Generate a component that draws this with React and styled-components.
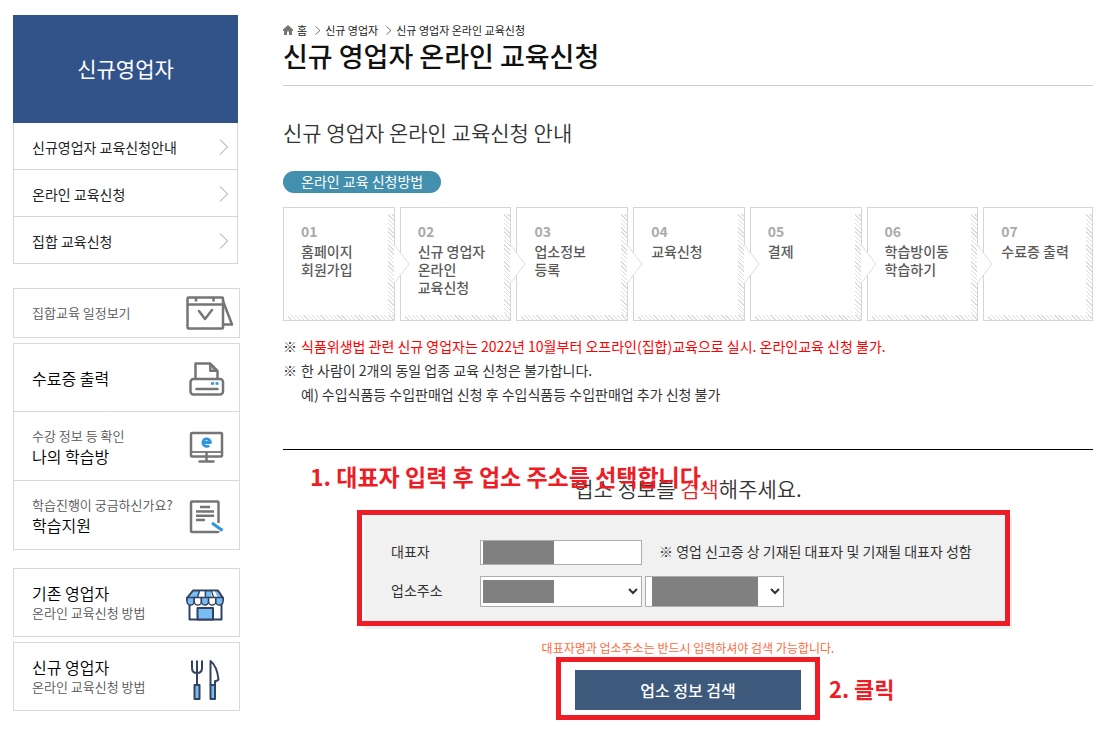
import React from "react";
import styled, { createGlobalStyle } from "styled-components";

const GlobalStyle = createGlobalStyle`
  *, *::before, *::after { box-sizing: border-box; }
  body {
    margin: 0;
    background: #fff;
    color: #333;
    font-family: "Noto Sans CJK KR", "Noto Sans", sans-serif;
    font-size: 14px;
    font-weight: 400;
    line-height: 20px;
  }
  h1, h2, h3, p, ul, ol { margin: 0; padding: 0; font-weight: inherit; }
  ul, ol { list-style: none; }
  a { color: inherit; text-decoration: none; }
`;

const Page = styled.div`
  display: flex;
  align-items: flex-start;
  gap: 43px;
  padding: 15px 20px 11px 13px;
`;

const Sidebar = styled.aside`
  flex: none;
  width: 227px;
`;

const MenuBox = styled.nav`
  width: 225px;
  margin-bottom: 24px;
`;

const MenuTitle = styled.h2`
  display: flex;
  align-items: center;
  justify-content: center;
  height: 108px;
  padding-bottom: 2px;
  background: #32528a;
  color: #fff;
  font-size: 21px;
`;

const MenuList = styled.ul`
  border: solid #d6d6d6;
  border-width: 0 1px;
`;

const MenuLink = styled.a`
  display: flex;
  align-items: center;
  justify-content: space-between;
  height: 47px;
  padding: 1px 8px 0 18px;
  border-bottom: 1px solid #d6d6d6;
  color: #222;
`;

const LinkBox = styled.ul`
  margin-bottom: ${(p) => (p.$last ? 18 : 5)}px;
  border: 1px solid #d9d9d9;
`;

const LinkRow = styled.a`
  display: flex;
  align-items: center;
  justify-content: space-between;
  height: ${(p) => (p.$short ? 48 : 67)}px;
  padding: 0 ${(p) => (p.$short ? 5 : 14)}px 0 18px;

  li + li > & {
    height: 69px;
    border-top: 1px solid #d9d9d9;
  }
`;

const LinkText = styled.span`
  display: flex;
  flex-direction: column;
`;

const Small = styled.span`
  color: #555;
  font-size: 13px;
  font-weight: 350;
`;

const Strong = styled.span`
  color: #000;
  font-size: 16px;
  font-weight: 350;
`;

const Main = styled.main`
  flex: 1;
  min-width: 0;
`;

const Breadcrumb = styled.nav`
  display: flex;
  align-items: center;
  padding-top: 6px;
  color: #222;
  font-size: 11px;
  line-height: 18px;

  svg { flex: none; }
  a { margin: 0 8px 0 4px; }
`;

const PageTitle = styled.h1`
  padding-bottom: 12px;
  border-bottom: 1px solid #cccdd3;
  color: #111;
  font-size: 27px;
  font-weight: 500;
  line-height: 34px;
`;

const SubTitle = styled.h2`
  margin-top: 30px;
  font-size: 21px;
  font-weight: 350;
  line-height: 32px;
`;

const Pill = styled.h3`
  width: fit-content;
  margin: 23px 0 14px;
  padding: 0 18px 2px;
  border-radius: 11px;
  background: #438fae;
  color: #fff;
  font-size: 14px;
`;

const Steps = styled.ol`
  display: grid;
  grid-template-columns: repeat(6, 112fr) 110fr;
  gap: 5px;
`;

const Step = styled.li`
  position: relative;
  min-height: 114px;
  padding: 13px 8px 8px 17px;
  border: 1px solid #d5d5d5;
  color: #5a5a5a;
  font-weight: 500;
  line-height: 18px;
  white-space: pre-line;

  &::before, &::after {
    content: "";
    position: absolute;
    right: 0;
    bottom: 0;
    background: repeating-linear-gradient(45deg, #fff 0 2px, #ddd 2px 3px);
  }
  &::before { top: 6px; width: 6px; }
  &::after { left: 4px; height: 5px; }
`;

const StepNumber = styled.strong`
  display: block;
  margin-bottom: 1px;
  color: #aaa;
  font-weight: 700;
  line-height: 20px;
`;

const StepArrow = styled.svg`
  position: absolute;
  z-index: 1;
  top: 36px;
  right: -16px;
`;

const Notes = styled.ul`
  margin: 13px 0 43px;
  line-height: 24px;
`;

const Note = styled.li`
  display: grid;
  grid-template-columns: 18px 1fr;
`;

const NoteText = styled.span`
  grid-column: 2;
  color: ${(p) => (p.$alert ? "#f00" : "#333")};
`;

const SearchSection = styled.section`
  position: relative;
  display: flex;
  flex-direction: column;
  align-items: center;
  padding-top: 22px;
  border-top: 1px solid #000;
`;

const SearchTitle = styled.h2`
  font-size: 21px;
  font-weight: 350;
  line-height: 32px;

  em { color: #e5241f; font-style: normal; }
`;

const SearchForm = styled.form`
  display: flex;
  flex-direction: column;
  align-items: center;
  width: 648px;
  max-width: 100%;
`;

const Panel = styled.div`
  position: relative;
  display: grid;
  grid-template-columns: 89px 1fr;
  row-gap: 11px;
  align-items: center;
  width: 100%;
  margin-top: 12px;
  padding: 24px 27px 22px;
  background: #f1f1f1;
`;

const Label = styled.label`
  padding-bottom: 4px;
`;

const Fields = styled.div`
  display: flex;
  align-items: center;
  gap: 3px;
`;

const Field = styled.span`
  position: relative;
  display: flex;
  width: ${(p) => p.$width}px;
  height: ${(p) => p.$height}px;
`;

const fieldLook = `
  width: 100%;
  height: 100%;
  margin: 0;
  padding: 0 2px;
  border: 1px solid #adadad;
  border-radius: 0;
  background: #fff;
  color: #333;
  font: inherit;
`;

const TextInput = styled.input`${fieldLook}`;
const Select = styled.select`${fieldLook}`;

const Mask = styled.span`
  position: absolute;
  top: ${(p) => p.$inset}px;
  bottom: ${(p) => p.$inset}px;
  left: ${(p) => p.$left}px;
  width: ${(p) => p.$width}px;
  background: #808080;
  pointer-events: none;
`;

const Hint = styled.span`
  padding: 0 0 4px 14px;
`;

const PanelFrame = styled.span`
  position: absolute;
  inset: -6px 2px 3px -7px;
  border: 5px solid #ee1c25;
  pointer-events: none;
`;

const Warning = styled.p`
  margin-top: 9px;
  color: #ff6a3c;
  font-size: 12px;
`;

const SubmitWrap = styled.div`
  position: relative;
  margin-top: 12px;
`;

const Submit = styled.button`
  display: block;
  width: 226px;
  height: 40px;
  padding: 0;
  border: 0;
  background: #3d5a7d;
  color: #fff;
  font: inherit;
  font-size: 16px;
  font-weight: 500;
`;

const SubmitFrame = styled.span`
  position: absolute;
  inset: -13px -19px -10px;
  border: 5px solid #ee1c25;
  pointer-events: none;
`;

const Guide = styled.strong`
  position: absolute;
  color: #ee1c25;
  font-size: 23px;
  font-weight: 700;
  line-height: 32px;
  white-space: nowrap;
`;

const EntryGuide = styled(Guide)`
  top: 10px;
  left: 27px;
`;

const ClickGuide = styled(Guide)`
  top: 2px;
  left: 254px;
  font-size: 22px;
`;

const ArrowIcon = () => (
  <svg width="10" height="16" viewBox="0 0 10 16" fill="none" stroke="#999ba3" aria-hidden="true">
    <path d="M1 .5 8.500 8 1 15.500" />
  </svg>
);

const HomeIcon = () => (
  <svg width="10" height="10" viewBox="0 0 10 10" fill="#777" aria-hidden="true">
    <path d="M5 0 0 4.600V6h1v4h3V6.500h2V10h3V6h1V4.600z" />
  </svg>
);

const CrumbArrow = () => (
  <svg width="6" height="9" viewBox="0 0 6 9" fill="none" stroke="#777" aria-hidden="true">
    <path d="M.5.5 5 4.500.5 8.500" />
  </svg>
);

const CalendarIcon = () => (
  <svg width="48" height="36" viewBox="0 0 48 36" fill="none" stroke="#757575" strokeWidth="2.500" strokeLinejoin="round" aria-hidden="true">
    <rect x="1.500" y="2.500" width="35.500" height="31" rx="1" />
    <path d="M1.500 9.500h35.500M10 2.500v4M27.500 2.500v4" />
    <path d="m37 6 9 23.500h-9" />
    <path d="m13 16 6 8 7-9" strokeWidth="2.500" strokeLinecap="round" />
  </svg>
);

const PrinterIcon = () => (
  <svg width="38" height="38" viewBox="0 -1 38 38" fill="none" stroke="#757575" strokeWidth="2.500" strokeLinejoin="round" aria-hidden="true">
    <path d="M8.500 19V3.500H23L30.500 11v8" />
    <path d="M23 4v7h7z" fill="#aaa" strokeWidth="1.800" />
    <rect x="3.500" y="19" width="32.500" height="15.500" rx="3" />
    <path d="M9.500 29h21" strokeLinecap="round" />
    <path d="M24 23.500h3M28.500 23.500h3" stroke="#2f95dc" />
  </svg>
);

const MonitorIcon = () => (
  <svg width="38" height="38" viewBox="0 0 38 38" fill="none" stroke="#757575" strokeWidth="2.500" strokeLinejoin="round" aria-hidden="true">
    <rect x="4" y="6" width="31" height="23.500" rx="1" />
    <path d="M4 25h31" strokeWidth="1.800" />
    <path d="M19.500 26v8M12.500 34.500h14" strokeLinecap="round" />
    <path d="M16 15.500h7.500a3.800 3.800 0 1 0-1.300 3" stroke="#2f95dc" strokeWidth="2.800" />
  </svg>
);

const DocumentIcon = () => (
  <svg width="38" height="38" viewBox="0 0 38 38" fill="none" stroke="#757575" strokeWidth="2.500" strokeLinejoin="round" aria-hidden="true">
    <path d="M31.500 27V6.500a1 1 0 0 0-1-1H5a1 1 0 0 0-1 1v28.500a1 1 0 0 0 1 1h25.500a1 1 0 0 0 1-1" />
    <path d="M13 11h10M9 15.500h18M9 19.800h18M9 24h9" />
    <path d="m25 27 10.500 7.500" stroke="#2f95dc" strokeWidth="3" />
  </svg>
);

const StoreIcon = () => (
  <svg width="40" height="38" viewBox="0 -4 40 38" fill="#fff" stroke="#334260" strokeWidth="2" strokeLinejoin="round" aria-hidden="true">
    <path d="M4.500 14v17.500h32V14" />
    <path d="M12.500 31.500V20h15.500v11.500z" fill="#79bdf2" />
    <path d="M8 2.500h25l5 7.500v2H2v-2z" fill="#79bdf2" />
    <path d="M15 3.500h4.500v7H13zM26 3.500h4l3 7h-6z" strokeWidth="0" />
    <path d="M14.500 3 12.500 9M20.500 3v6M26.500 3l2 6" strokeWidth="1.300" />
    <path d="M2 9.500h7.200v4a3.600 3.600 0 0 1-7.200 0z" fill="#79bdf2" strokeWidth="1.500" />
    <path d="M9.200 9.500h7.200v4a3.600 3.600 0 0 1-7.200 0z" strokeWidth="1.500" />
    <path d="M16.400 9.500h7.200v4a3.600 3.600 0 0 1-7.200 0z" fill="#79bdf2" strokeWidth="1.500" />
    <path d="M23.600 9.500h7.200v4a3.600 3.600 0 0 1-7.200 0z" strokeWidth="1.500" />
    <path d="M30.800 9.500H38v4a3.600 3.600 0 0 1-7.200 0z" fill="#79bdf2" strokeWidth="1.500" />
  </svg>
);

const CutleryIcon = () => (
  <svg width="38" height="48" viewBox="0 -6 38 48" fill="none" stroke="#334260" strokeWidth="2" strokeLinejoin="round" aria-hidden="true">
    <path d="M5 1.500V9q0 5 5 5t5-5V1.500M10 1.500V26" />
    <rect x="7.500" y="26" width="5" height="14" fill="#79bdf2" />
    <path d="M23.500 26V2q6.500 5 8 18.500-2 2-3.500 1.500V26" />
    <rect x="23.500" y="26" width="4.500" height="14" fill="#79bdf2" />
  </svg>
);

const menu = ["신규영업자 교육신청안내", "온라인 교육신청", "집합 교육신청"];

const steps = [
  "홈페이지\n회원가입",
  "신규 영업자\n온라인\n교육신청",
  "업소정보\n등록",
  "교육신청",
  "결제",
  "학습방이동\n학습하기",
  "수료증 출력",
];

export default function App() {
  return (
    <>
      <GlobalStyle />
      <Page>
        <Sidebar>
          <MenuBox>
            <MenuTitle>신규영업자</MenuTitle>
            <MenuList>
              {menu.map((label) => (
                <li key={label}>
                  <MenuLink href="#">
                    {label}
                    <ArrowIcon />
                  </MenuLink>
                </li>
              ))}
            </MenuList>
          </MenuBox>
          <LinkBox>
            <li>
              <LinkRow href="#" $short>
                <Small>집합교육 일정보기</Small>
                <CalendarIcon />
              </LinkRow>
            </li>
          </LinkBox>
          <LinkBox $last>
            <li>
              <LinkRow href="#">
                <Strong>수료증 출력</Strong>
                <PrinterIcon />
              </LinkRow>
            </li>
            <li>
              <LinkRow href="#">
                <LinkText>
                  <Small>수강 정보 등 확인</Small>
                  <Strong>나의 학습방</Strong>
                </LinkText>
                <MonitorIcon />
              </LinkRow>
            </li>
            <li>
              <LinkRow href="#">
                <LinkText>
                  <Small>학습진행이 궁금하신가요?</Small>
                  <Strong>학습지원</Strong>
                </LinkText>
                <DocumentIcon />
              </LinkRow>
            </li>
          </LinkBox>
          <LinkBox>
            <li>
              <LinkRow href="#">
                <LinkText>
                  <Strong>기존 영업자</Strong>
                  <Small>온라인 교육신청 방법</Small>
                </LinkText>
                <StoreIcon />
              </LinkRow>
            </li>
          </LinkBox>
          <LinkBox>
            <li>
              <LinkRow href="#">
                <LinkText>
                  <Strong>신규 영업자</Strong>
                  <Small>온라인 교육신청 방법</Small>
                </LinkText>
                <CutleryIcon />
              </LinkRow>
            </li>
          </LinkBox>
        </Sidebar>

        <Main>
          <Breadcrumb aria-label="현재 위치">
            <HomeIcon />
            <a href="#">홈</a>
            <CrumbArrow />
            <a href="#">신규 영업자</a>
            <CrumbArrow />
            <a href="#">신규 영업자 온라인 교육신청</a>
          </Breadcrumb>
          <PageTitle>신규 영업자 온라인 교육신청</PageTitle>

          <SubTitle>신규 영업자 온라인 교육신청 안내</SubTitle>
          <Pill>온라인 교육 신청방법</Pill>
          <Steps>
            {steps.map((text, i) => (
              <Step key={text}>
                <StepNumber>{`0${i + 1}`}</StepNumber>
                {text}
                {i < steps.length - 1 && (
                  <StepArrow width="16" height="40" viewBox="0 0 16 40" aria-hidden="true">
                    <path d="M0 .5 15 20 0 39.500" fill="#fff" stroke="#ddd" />
                  </StepArrow>
                )}
              </Step>
            ))}
          </Steps>

          <Notes>
            <Note>
              <span>※</span>
              <NoteText $alert>
                식품위생법 관련 신규 영업자는 2022년 10월부터 오프라인(집합)교육으로 실시. 온라인교육 신청 불가.
              </NoteText>
            </Note>
            <Note>
              <span>※</span>
              <NoteText>한 사람이 2개의 동일 업종 교육 신청은 불가합니다.</NoteText>
              <NoteText>예) 수입식품등 수입판매업 신청 후 수입식품등 수입판매업 추가 신청 불가</NoteText>
            </Note>
          </Notes>

          <SearchSection>
            <SearchTitle>
              업소 정보를 <em>검색</em>해주세요.
            </SearchTitle>
            <EntryGuide>1. 대표자 입력 후 업소 주소를 선택합니다.</EntryGuide>
            <SearchForm onSubmit={(e) => e.preventDefault()}>
              <Panel>
                <Label htmlFor="owner">대표자</Label>
                <Fields>
                  <Field $width={162} $height={25}>
                    <TextInput id="owner" type="text" />
                    <Mask $inset={1} $left={3} $width={71} />
                  </Field>
                  <Hint>※ 영업 신고증 상 기재된 대표자 및 기재될 대표자 성함</Hint>
                </Fields>
                <Label htmlFor="region">업소주소</Label>
                <Fields>
                  <Field $width={162} $height={31}>
                    <Select id="region" />
                    <Mask $inset={4} $left={3} $width={71} />
                  </Field>
                  <Field $width={139} $height={31}>
                    <Select aria-label="업소주소 시군구" />
                    <Mask $inset={1} $left={7} $width={106} />
                  </Field>
                </Fields>
                <PanelFrame />
              </Panel>
              <Warning>대표자명과 업소주소는 반드시 입력하셔야 검색 가능합니다.</Warning>
              <SubmitWrap>
                <Submit type="submit">업소 정보 검색</Submit>
                <SubmitFrame />
                <ClickGuide>2. 클릭</ClickGuide>
              </SubmitWrap>
            </SearchForm>
          </SearchSection>
        </Main>
      </Page>
    </>
  );
}
